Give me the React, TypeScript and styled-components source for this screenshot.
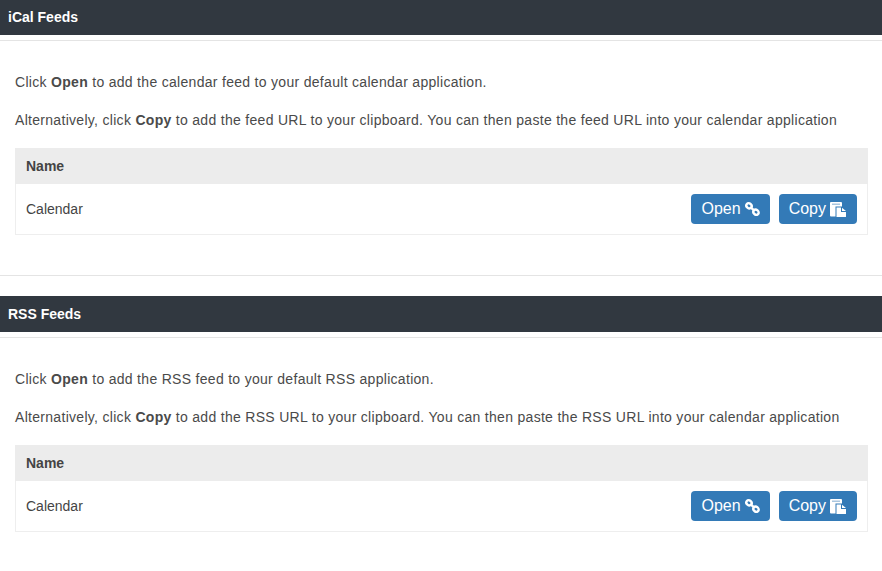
import React from "react";
import styled, { createGlobalStyle } from "styled-components";

const Global = createGlobalStyle`
  html, body { margin: 0; padding: 0; background: #fff; }
  body { font-family: "Liberation Sans", Arial, sans-serif; font-size: 14px; color: #444; }
`;

const Page = styled.div`
  display: flex;
  flex-direction: column;
  margin-top: -1px;
`;

const Section = styled.section`
  display: flex;
  flex-direction: column;
`;

const TitleBar = styled.h2`
  margin: 0;
  height: 36px;
  padding: 0 8px;
  display: flex;
  align-items: center;
  background: #313840;
  color: #fff;
  font-size: 14px;
  font-weight: 700;
`;

const Rule = styled.hr<{ $top: number; $bottom?: number }>`
  width: 100%;
  box-sizing: border-box;
  margin: ${(p) => p.$top}px 0 ${(p) => p.$bottom ?? 0}px;
  border: 0;
  border-top: 1px solid #e4e4e4;
`;

const Body = styled.div`
  display: flex;
  flex-direction: column;
  padding: 33px 14px 0 15px;
`;

const Para = styled.p`
  margin: 0 0 21px;
  font-size: 14px;
  line-height: 17px;
  letter-spacing: 0.3px;
  color: #4a4a4a;
  white-space: nowrap;
`;

const Table = styled.div`
  margin-top: -2px;
  border: 1px solid #eee;
  border-top: 0;
`;

const HeaderRow = styled.div`
  height: 36px;
  margin: 0 -1px;
  padding: 0 11px;
  display: flex;
  align-items: center;
  background: #ececec;
  font-weight: 700;
  color: #444;
`;

const Row = styled.div`
  height: 50px;
  padding: 0 10px;
  display: flex;
  align-items: center;
  justify-content: space-between;
`;

const Actions = styled.div`
  display: flex;
  gap: 9px;
`;

const Button = styled.button<{ $left: number }>`
  height: 30px;
  padding: 0 10px 0 ${(p) => p.$left}px;
  display: inline-flex;
  align-items: center;
  gap: 4px;
  border: 0;
  border-radius: 4px;
  background: #337ab7;
  color: #fff;
  font-family: inherit;
  font-size: 16px;
`;

const LinkIcon = () => (
  <svg width="15" height="14" viewBox="0 0 15 14" fill="none" stroke="#fff" strokeWidth="2.4">
    <ellipse cx="4" cy="3.800" rx="2.800" ry="2.400" transform="rotate(40 4 3.800)" />
    <ellipse cx="11" cy="10.200" rx="2.800" ry="2.400" transform="rotate(40 11 10.200)" />
    <path d="M5.500 5.200l4 3.600" />
  </svg>
);

const CopyIcon = () => (
  <svg width="17" height="15" viewBox="0 0 17 15">
    <rect x="0" y="0" width="12" height="14.500" rx="1" fill="#fff" />
    <rect x="2" y="1.500" width="8" height="1.500" fill="#a9c6df" />
    <path d="M5.500 4.500H12L17 9v6H5.500z" fill="#337ab7" />
    <path d="M6.500 5.500H11V10h5v4.500a.5.5 0 0 1-.5.5h-9zM12 5.800L16 9h-4z" fill="#fff" />
  </svg>
);

const Feed = ({ title, first, second }: { title: string; first: React.ReactNode; second: React.ReactNode }) => (
  <Section>
    <TitleBar>{title}</TitleBar>
    <Rule $top={5} />
    <Body>
      <Para>{first}</Para>
      <Para>{second}</Para>
      <Table>
        <HeaderRow>Name</HeaderRow>
        <Row>
          <span>Calendar</span>
          <Actions>
            <Button $left={11}>Open <LinkIcon /></Button>
            <Button $left={10}>Copy <CopyIcon /></Button>
          </Actions>
        </Row>
      </Table>
    </Body>
  </Section>
);

export default function App() {
  return (
    <Page>
      <Global />
      <Feed
        title="iCal Feeds"
        first={<>Click <b>Open</b> to add the calendar feed to your default calendar application.</>}
        second={<>Alternatively, click <b>Copy</b> to add the feed URL to your clipboard. You can then paste the feed URL into your calendar application</>}
      />
      <Rule $top={40} $bottom={20} />
      <Feed
        title="RSS Feeds"
        first={<>Click <b>Open</b> to add the RSS feed to your default RSS application.</>}
        second={<>Alternatively, click <b>Copy</b> to add the RSS URL to your clipboard. You can then paste the RSS URL into your calendar application</>}
      />
    </Page>
  );
}
